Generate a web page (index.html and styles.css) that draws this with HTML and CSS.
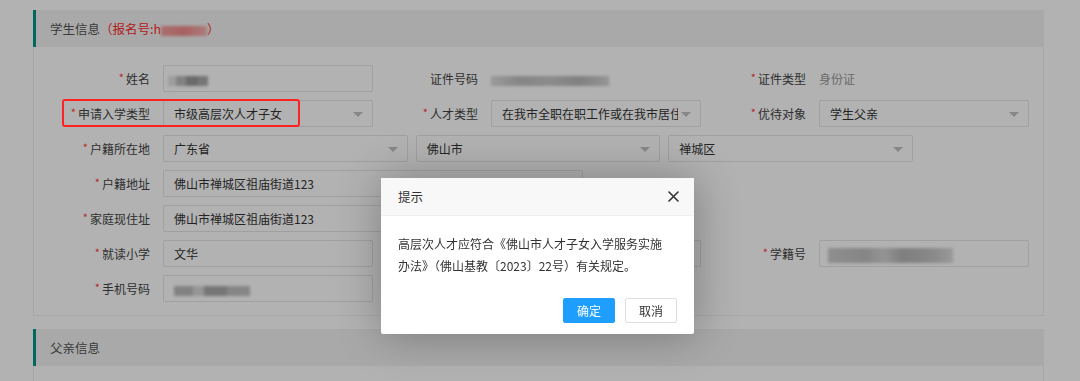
FILE: index.html
```html
<!DOCTYPE html>
<html lang="zh-CN">
<head>
    <meta charset="UTF-8">
    <meta name="viewport" content="width=device-width, initial-scale=1.0">
    <title>学生信息</title>
    <link rel="stylesheet" href="styles.css">
</head>
<body>
    <div class="page">
        <section class="panel">
            <div class="panel-head">学生信息<span class="regno">（报名号:h<i class="blur blur-red"></i>）</span></div>
            <div class="panel-body">
                <div class="row">
                    <div class="field">
                        <label class="req">姓名</label>
                        <div class="input"><i class="blur blur-name"></i></div>
                    </div>
                    <div class="field">
                        <label>证件号码</label>
                        <div class="text"><i class="blur blur-id"></i></div>
                    </div>
                    <div class="field">
                        <label class="req">证件类型</label>
                        <div class="text muted">身份证</div>
                    </div>
                </div>

                <div class="row">
                    <div class="field mark">
                        <label class="req">申请入学类型</label>
                        <div class="input select"><span class="val">市级高层次人才子女</span></div>
                    </div>
                    <div class="field">
                        <label class="req">人才类型</label>
                        <div class="input select"><span class="val">在我市全职在职工作或在我市居住满一年</span></div>
                    </div>
                    <div class="field">
                        <label class="req">优待对象</label>
                        <div class="input select"><span class="val">学生父亲</span></div>
                    </div>
                </div>

                <div class="row">
                    <div class="field">
                        <label class="req">户籍所在地</label>
                        <div class="area">
                            <div class="input select"><span class="val">广东省</span></div>
                            <div class="input select"><span class="val">佛山市</span></div>
                            <div class="input select"><span class="val">禅城区</span></div>
                        </div>
                    </div>
                </div>

                <div class="row">
                    <div class="field">
                        <label class="req">户籍地址</label>
                        <div class="input wide">佛山市禅城区祖庙街道123</div>
                    </div>
                </div>

                <div class="row">
                    <div class="field">
                        <label class="req">家庭现住址</label>
                        <div class="input wide">佛山市禅城区祖庙街道123</div>
                    </div>
                </div>

                <div class="row">
                    <div class="field">
                        <label class="req">就读小学</label>
                        <div class="input">文华</div>
                    </div>
                    <div class="field">
                        <label></label>
                        <div class="input"></div>
                    </div>
                    <div class="field">
                        <label class="req">学籍号</label>
                        <div class="input"><i class="blur blur-code"></i></div>
                    </div>
                </div>

                <div class="row">
                    <div class="field">
                        <label class="req">手机号码</label>
                        <div class="input"><i class="blur blur-phone"></i></div>
                    </div>
                </div>
            </div>
        </section>

        <section class="panel">
            <div class="panel-head">父亲信息</div>
            <div class="panel-body empty"></div>
        </section>
    </div>

    <div class="shade"></div>

    <div class="layer">
        <div class="layer-title">
            <span>提示</span>
            <svg class="close" width="11" height="11" viewBox="0 0 11 11">
                <path d="M1 1 L10 10 M10 1 L1 10" stroke="#333" stroke-width="1.6" stroke-linecap="round"/>
            </svg>
        </div>
        <div class="layer-content">高层次人才应符合《佛山市人才子女入学服务实施办法》（佛山基教〔2023〕22号）有关规定。</div>
        <div class="layer-btns">
            <button class="btn primary">确定</button>
            <button class="btn">取消</button>
        </div>
    </div>
</body>
</html>
```

FILE: styles.css
```css
body {
    margin: 0;
    background: #fff;
    font-family: "Noto Sans CJK SC", "Noto Sans", sans-serif;
    font-size: 12px;
    color: #333;
}

.page {
    padding: 10px 36px 0 33px;
}

.panel + .panel {
    margin-top: 13px;
}

.panel-head {
    height: 37px;
    line-height: 37px;
    padding-left: 14px;
    border-left: 3px solid #009688;
    background: #f2f2f2;
    font-size: 12.5px;
    color: #555;
}

.regno {
    color: #ff2a2a;
}

.panel-body {
    border: 1px solid #f0f0f0;
    border-top: none;
    padding: 18px 0 13px 11px;
}

.panel-body.empty {
    height: 40px;
}

.row {
    display: flex;
    height: 27px;
}

.row + .row {
    margin-top: 8px;
}

.field {
    display: flex;
    align-items: center;
}

.field label {
    width: 118px;
    padding-right: 13px;
    box-sizing: border-box;
    text-align: right;
    color: #444;
    white-space: nowrap;
}

.field label.req::before {
    content: "*";
    color: #ff3b3b;
    font-size: 11px;
    margin-right: 2px;
    position: relative;
    top: -2px;
}

.input {
    position: relative;
    width: 210px;
    height: 27px;
    line-height: 25px;
    box-sizing: border-box;
    padding: 0 10px;
    border: 1px solid #e6e6e6;
    border-radius: 2px;
    background: #fff;
    white-space: nowrap;
    overflow: hidden;
}

.input.wide {
    width: 420px;
}

.select {
    padding-right: 22px;
}

.select .val {
    display: block;
    overflow: hidden;
    white-space: nowrap;
}

.select::after {
    content: "";
    position: absolute;
    right: 9px;
    top: 11px;
    border: 5px solid transparent;
    border-top: 5px solid #c2c2c2;
    border-bottom: none;
}

.area {
    display: grid;
    grid-template-columns: repeat(3, 1fr);
    gap: 8px;
    width: 750px;
}

.area .input {
    width: auto;
}

.text {
    width: 210px;
    line-height: 27px;
    white-space: nowrap;
}

.text.muted {
    color: #999;
}

/* pixelated redactions */
.blur {
    display: inline-block;
    vertical-align: middle;
    filter: blur(1.5px);
}

.blur-name {
    width: 40px;
    height: 10px;
    margin-left: -6px;
    background: linear-gradient(90deg, #e2e2e2 0 20%, #bbb 20% 45%, #999 45% 75%, #aaa 75%);
}

.blur-id {
    width: 118px;
    height: 10px;
    background: linear-gradient(90deg, #ddd, #bfbfbf 25%, #c8c8c8 50%, #b8b8b8 75%, #d5d5d5);
}

.blur-code {
    width: 125px;
    height: 15px;
    margin-left: -2px;
    background: linear-gradient(90deg, #ccc, #c0c0c0 30%, #d4d4d4 45%, #b5b5b5 60%, #c6c6c6 85%, #ddd);
}

.blur-phone {
    width: 76px;
    height: 10px;
    background: linear-gradient(90deg, #bbb 0 25%, #d8d8d8 25% 40%, #aaa 40% 70%, #c0c0c0 70%);
}

.blur-red {
    width: 46px;
    height: 10px;
    background: linear-gradient(90deg, #f5a0a0, #f08a8a 50%, #f7b2b2);
}

/* red annotation around the admission type */
.field.mark {
    position: relative;
}

.field.mark::after {
    content: "";
    position: absolute;
    left: 17px;
    top: -1px;
    width: 238px;
    height: 28px;
    box-sizing: border-box;
    border: 2px solid #f22;
    border-radius: 3px;
    z-index: 20;
}

.shade {
    position: fixed;
    inset: 0;
    background: rgba(0, 0, 0, 0.3);
    z-index: 10;
}

.layer {
    position: fixed;
    left: 381px;
    top: 178px;
    width: 313px;
    background: #fff;
    border-radius: 2px;
    box-shadow: 1px 1px 45px rgba(0, 0, 0, 0.3);
    z-index: 30;
}

.layer-title {
    display: flex;
    align-items: center;
    justify-content: space-between;
    height: 37px;
    padding: 0 15px 0 17px;
    background: #f8f8f8;
    border-bottom: 1px solid #f0f0f0;
    font-size: 12.5px;
    color: #333;
}

.layer-content {
    padding: 17px 24px 0 17px;
    line-height: 22px;
    color: #333;
}

.layer-btns {
    display: flex;
    justify-content: flex-end;
    gap: 10px;
    padding: 21px 17px 11px;
}

.btn {
    height: 25px;
    padding: 0 13px;
    border: 1px solid #dedede;
    border-radius: 2px;
    background: #fff;
    color: #333;
    font-family: inherit;
    font-size: 12px;
}

.btn.primary {
    background: #1e9fff;
    border-color: #1e9fff;
    color: #fff;
}
```
